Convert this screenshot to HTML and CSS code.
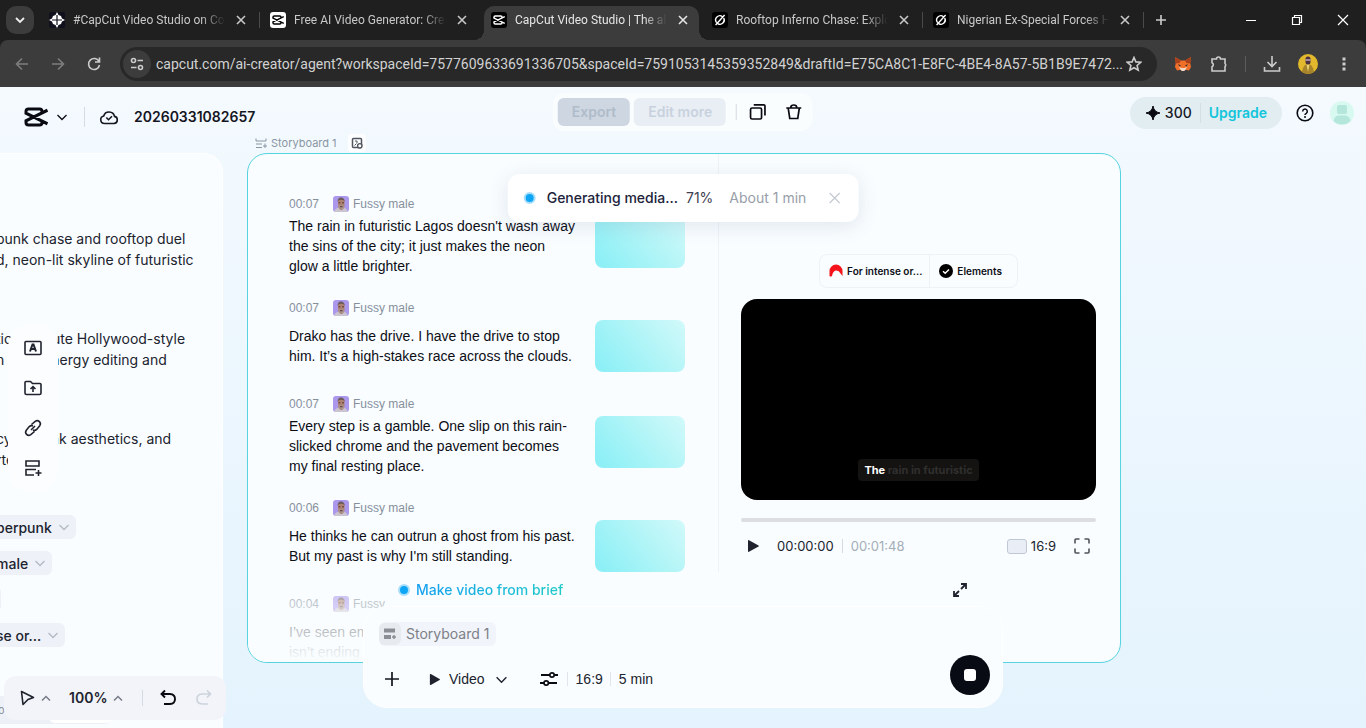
FILE: index.html
```
<!DOCTYPE html>
<html lang="en">
<head>
	<meta charset="UTF-8">
	<title>CapCut Video Studio</title>
	<link rel="stylesheet" href="styles.css">
</head>
<body>
	<!-- shared icons -->
	<svg class="sprite" aria-hidden="true">
		<symbol id="capcut" viewBox="0 0 24 20">
			<path d="M23.500 3.200 2 13.800V15.500Q2 18 4.500 18H15.500Q18 18 18 15.500V14.500M23.500 16.800 2 6.200V4.500Q2 2 4.500 2H15.500Q18 2 18 4.500V5.500" fill="none" stroke="currentColor" stroke-width="3"/>
		</symbol>
		<symbol id="grok" viewBox="0 0 16 16">
			<rect width="16" height="16" rx="3" fill="#000"/>
			<path d="M10.500 4.700A4.200 4.200 0 0 0 4.600 10.600M5.800 11.600A4.200 4.200 0 0 0 11.700 6M3.600 13 12.600 3" fill="none" stroke="#fff" stroke-width="1.400"/>
		</symbol>
		<symbol id="x" viewBox="0 0 16 16">
			<path d="m4 4 8 8M12 4l-8 8" fill="none" stroke="currentColor" stroke-width="1.600"/>
		</symbol>
		<symbol id="down" viewBox="0 0 12 12">
			<path d="m1.500 4 4.500 4.500L10.500 4" fill="none" stroke="currentColor" stroke-width="1.300"/>
		</symbol>
		<symbol id="up" viewBox="0 0 12 12">
			<path d="M2 8.500 6 4.500l4 4" fill="none" stroke="currentColor" stroke-width="1.400"/>
		</symbol>
		<symbol id="face" viewBox="0 0 16 16">
			<rect width="16" height="16" rx="3" fill="#ab98ec"/>
			<path d="M1 16q1-4 5-4.500h4q4 .5 5 4.500z" fill="#c9c4cf"/>
			<path d="M5 4q3-4 6.500 0v6q-1 4-3.200 4T5 10z" fill="#b08270"/>
			<path d="M4.600 6Q4.500 1.500 8 1.500T11.800 6L11 4.500Q8 3 5.500 4.500z" fill="#6b5a5c"/>
			<path d="M5 9.500q3-1 6.400 0-.4 3.500-3 3.700Q5.400 13 5 9.500" fill="#a99089"/>
			<path d="M5.500 6.800h2M9 6.800h2M7 10.700h2.500" stroke="#4a3034" stroke-width=".9"/>
		</symbol>
		<symbol id="play" viewBox="0 0 14 14">
			<path d="M2 1.800q0-1 1-.6L12.500 6.400q.8.600 0 1.200L3 12.800q-1 .4-1-.6z" fill="currentColor"/>
		</symbol>
	</svg>

	<header class="browser">
		<div class="tabstrip">
			<button class="tab-search" aria-label="Search tabs"><svg width="12" height="12"><path d="m2 4 4 4 4-4" fill="none" stroke="#eee" stroke-width="1.800"/></svg></button>
			<div class="tabs">
				<div class="tab">
					<svg width="16" height="16"><rect width="16" height="16" rx="2" fill="#10101c"/><path d="M8 0 9.500 3 12 4l1 2.500L16 8l-3 1.500L12 12l-2.500 1L8 16l-1.500-3L4 12 3 9.500 0 8l3-1.500L4 4l2.500-1z" fill="#fff"/><path d="M8 3v10M3 8h10" stroke="#10101c" stroke-width="1.200"/></svg>
					<span class="tab-title">#CapCut Video Studio on Community</span>
					<button class="tab-close" aria-label="Close tab"><svg><use href="#x"/></svg></button>
				</div>
				<div class="tab sep">
					<span class="fav fav-light"><svg width="12" height="10"><use href="#capcut"/></svg></span>
					<span class="tab-title">Free AI Video Generator: Create videos</span>
					<button class="tab-close" aria-label="Close tab"><svg><use href="#x"/></svg></button>
				</div>
				<div class="tab active">
					<span class="fav fav-dark"><svg width="12" height="10"><use href="#capcut"/></svg></span>
					<span class="tab-title">CapCut Video Studio | The all-in-one</span>
					<button class="tab-close" aria-label="Close tab"><svg><use href="#x"/></svg></button>
				</div>
				<div class="tab">
					<svg width="16" height="16"><use href="#grok"/></svg>
					<span class="tab-title">Rooftop Inferno Chase: Explosive</span>
					<button class="tab-close" aria-label="Close tab"><svg><use href="#x"/></svg></button>
				</div>
				<div class="tab sep">
					<svg width="16" height="16"><use href="#grok"/></svg>
					<span class="tab-title">Nigerian Ex-Special Forces Hero</span>
					<button class="tab-close" aria-label="Close tab"><svg><use href="#x"/></svg></button>
				</div>
				<button class="new-tab sep" aria-label="New tab"><svg width="12" height="12"><path d="M6 1v10M1 6h10" stroke="#ccc" stroke-width="1.600"/></svg></button>
			</div>
			<div class="window-buttons">
				<button aria-label="Minimize"><svg width="12" height="12"><path d="M1 6.500h10" stroke="#fff"/></svg></button>
				<button aria-label="Restore"><svg width="12" height="12"><path d="M1.500 3.500h7v7h-7zM3.500 3V1.500h7v7H9" fill="none" stroke="#fff" stroke-width="1.200"/></svg></button>
				<button aria-label="Close"><svg width="12" height="12"><path d="m1 1 10 10M11 1 1 11" stroke="#fff" stroke-width="1.200"/></svg></button>
			</div>
		</div>
		<div class="toolbar">
			<button class="dim" aria-label="Back"><svg width="16" height="16"><path d="M14 8H3M8 2.500 2.500 8 8 13.500" /></svg></button>
			<button class="dim" aria-label="Forward"><svg width="16" height="16"><path d="M2 8h11M8 2.500 13.500 8 8 13.500"/></svg></button>
			<button aria-label="Reload"><svg width="16" height="16"><path d="M13 5.500A5.500 5.500 0 1 0 13.500 9M13.500 1.500V6H9"/></svg></button>
			<div class="omnibox">
				<button class="site-info" aria-label="Site information"><svg width="14" height="14"><circle cx="3.500" cy="3.500" r="2"/><path d="M7.500 3.500H13M1 10.500h5.500"/><circle cx="10.500" cy="10.500" r="2"/></svg></button>
				<input class="url" type="text" aria-label="Address" value="capcut.com/ai-creator/agent?workspaceId=7577609633691336705&amp;spaceId=7591053145359352849&amp;draftId=E75CA8C1-E8FC-4BE4-8A57-5B1B9E7472...">
				<button class="bookmark" aria-label="Bookmark"><svg width="16" height="16"><path d="m8 1.500 1.900 4.400 4.800.4-3.600 3.200 1.100 4.700L8 11.700l-4.200 2.500 1.100-4.700L1.300 6.300l4.800-.4z"/></svg></button>
			</div>
			<div class="extensions">
				<button aria-label="Wallet"><svg class="plain" width="18" height="16"><path d="m1 1 6 3.500h4L17 1l-.8 6 .8 4-2 3.500-3.500-.8L10 15H8l-1.500-1.300-3.500.8L1 11l.8-4z" fill="#f0702a"/><path d="m1 1 6 3.500L5.500 7l-4 .5zM17 1l-6 3.500L12.500 7l4 .5z" fill="#a8411c"/><path d="m4 8 3 1.500-1.500 1zM14 8l-3 1.500 1.500 1z" fill="#33312f"/><path d="m5 11 2.500 1h3l2.500-1-1.500 2.700L10 15H8l-1.500-1.300z" fill="#f0d8c8"/></svg></button>
				<button aria-label="Extensions"><svg width="18" height="18"><path d="M2 4h4.500a2 2 0 0 1 4 0H15v4.500a2 2 0 0 1 0 3V16H2v-4.200a2.200 2.200 0 0 0 0-4z"/></svg></button>
				<span class="line"></span>
				<button aria-label="Downloads"><svg width="18" height="18"><path d="M9 1v10M4.500 7 9 11.500 13.500 7M1.500 12v4h15v-4"/></svg></button>
				<button aria-label="Profile"><svg class="plain" width="20" height="20"><circle cx="10" cy="10" r="10" fill="#e2b92c"/><path d="M4 18q1-6 4-7.500h4q3 1.500 4 7.500-6 4-12 0" fill="#a78329"/><path d="M8.500 10.500h3L10 18z" fill="#e9d27a"/><rect x="7.500" y="2.500" width="5" height="8" rx="2.500" fill="#4a3040"/><path d="M7.500 6h5" stroke="#b9a4b4"/></svg></button>
				<button aria-label="Menu"><svg class="plain" width="16" height="16"><path d="M6.500 1.500h3v3h-3zM6.500 6.500h3v3h-3zM6.500 11.500h3v3h-3z" fill="#ccc"/></svg></button>
			</div>
		</div>
	</header>

	<main class="app">
		<div class="topbar">
			<button class="logo" aria-label="CapCut menu"><svg width="24" height="20"><use href="#capcut"/></svg><svg width="12" height="12"><use href="#down"/></svg></button>
			<span class="line tall"></span>
			<svg width="20" height="20"><path d="M5.500 16.500H15a3.600 3.600 0 0 0 .5-7.100A5.600 5.600 0 0 0 4.700 9 3.800 3.800 0 0 0 5.500 16.500M7.300 10.500l2.200 2.200 3.500-3.500" fill="none" stroke="#15161f" stroke-width="1.600"/></svg>
			<h1>20260331082657</h1>
			<div class="account">
				<div class="credits">
					<svg width="16" height="16"><path d="M8 1q1 6 7 7-6 1-7 7-1-6-7-7 6-1 7-7" fill="#0a0b12" stroke="#0a0b12"/></svg>
					<span>300</span>
					<a href="#">Upgrade</a>
				</div>
				<button aria-label="Help"><svg width="18" height="18"><circle cx="9" cy="9" r="7.800" fill="none" stroke="#0a0b12" stroke-width="1.600"/><path d="M6.700 7.400a2.300 2.300 0 1 1 3.600 1.900Q9 10 9 11" fill="none" stroke="#0a0b12" stroke-width="1.500"/><circle cx="9" cy="13" r="1" fill="#0a0b12"/></svg></button>
				<button aria-label="Account"><svg width="24" height="24"><circle cx="12" cy="12" r="12" fill="#d8f9f0"/><rect x="7" y="4" width="10" height="9" rx="2" fill="#b5e6db"/><path d="M3.500 20q1-5 5-5.500h7q4 .5 5 5.500a12 12 0 0 1-17 0" fill="#b5e6db"/></svg></button>
			</div>
		</div>

		<section class="brief">
			<div class="brief-text">
				<p>punk chase and rooftop duel<br>d, neon-lit skyline of futuristic</p>
				<p>tic 1-minute Hollywood-style<br>n high-energy editing and</p>
				<p>cyberpunk aesthetics, and<br>rte</p>
				<div class="options">
					<button>berpunk <svg><use href="#down"/></svg></button>
					<button>male <svg><use href="#down"/></svg></button>
					<button class="cut" aria-label="Option"></button>
					<button>se or... <svg><use href="#down"/></svg></button>
				</div>
			</div>
			<div class="brief-foot"><span>o</span><i></i></div>
		</section>

		<section class="storyboard">
			<div class="board-label">
				<svg width="12" height="12"><path d="M1 1.500v2.500h10V1.500M1 7h6M1 10.500h6M10 6.500v4.500M8 9h4" fill="none" stroke="#8a95a3"/></svg>
				<span>Storyboard 1</span>
				<button aria-label="Add to board"><svg width="12" height="12"><rect x="1.500" y="1.500" width="9" height="9" rx="1" fill="none" stroke="#50565e" stroke-width="1.500"/><circle cx="8.800" cy="8.800" r="2.200" fill="#fff" stroke="#50565e" stroke-width="1.300"/><path d="M4 4h2v2M3.500 8.500l2-2" fill="none" stroke="#50565e"/></svg></button>
			</div>
			<div class="board">
				<div class="script">
					<article class="scene">
						<div class="meta"><time>00:07</time><svg><use href="#face"/></svg><span>Fussy male</span></div>
						<p>The rain in futuristic Lagos doesn't wash away<br>the sins of the city; it just makes the neon<br>glow a little brighter.</p>
						<div class="thumb"></div>
					</article>
					<article class="scene">
						<div class="meta"><time>00:07</time><svg><use href="#face"/></svg><span>Fussy male</span></div>
						<p>Drako has the drive. I have the drive to stop<br>him. It’s a high-stakes race across the clouds.</p>
						<div class="thumb"></div>
					</article>
					<article class="scene">
						<div class="meta"><time>00:07</time><svg><use href="#face"/></svg><span>Fussy male</span></div>
						<p>Every step is a gamble. One slip on this rain-<br>slicked chrome and the pavement becomes<br>my final resting place.</p>
						<div class="thumb"></div>
					</article>
					<article class="scene">
						<div class="meta"><time>00:06</time><svg><use href="#face"/></svg><span>Fussy male</span></div>
						<p>He thinks he can outrun a ghost from his past.<br>But my past is why I'm still standing.</p>
						<div class="thumb"></div>
					</article>
					<article class="scene">
						<div class="meta"><time>00:04</time><svg><use href="#face"/></svg><span>Fussy male</span></div>
						<p>I’ve seen em<br>isn’t ending</p>
						<div class="thumb"></div>
					</article>
				</div>
				<div class="preview">
					<div class="chips">
						<button><svg width="14" height="14"><path d="M.5 12V7a6.500 6.500 0 0 1 13 0v5l-2-2.500Q10 6.500 7.500 6.500 4 6.500 3 12q-1.500 1-2.500 0" fill="#f5141b"/></svg>For intense or...</button>
						<button><svg width="14" height="14"><circle cx="7" cy="7" r="7" fill="#000"/><path d="m4 7.200 2.200 2.100L10 5.500" fill="none" stroke="#fff" stroke-width="1.500"/></svg>Elements</button>
					</div>
					<div class="video"><p class="caption">The <span>rain in futuristic</span></p></div>
					<input class="seek" type="range" min="0" max="108" value="0" aria-label="Seek">
					<div class="controls">
						<button aria-label="Play"><svg width="14" height="14"><use href="#play"/></svg></button>
						<time>00:00:00</time>
						<time class="total">00:01:48</time>
						<button class="ratio"><i></i>16:9</button>
						<button aria-label="Full screen"><svg width="16" height="16"><path d="M1 5.500V2q0-1 1-1h3.500M10.500 1H14q1 0 1 1v3.500M15 10.500V14q0 1-1 1h-3.500M5.500 15H2q-1 0-1-1v-3.500" fill="none" stroke="#50535b" stroke-width="1.600"/></svg></button>
					</div>
				</div>
			</div>
		</section>

		<div class="actions">
			<button class="export" disabled>Export</button>
			<button class="edit" disabled>Edit more</button>
			<span class="line"></span>
			<button aria-label="Duplicate"><svg width="18" height="18"><rect x="1.800" y="5" width="11" height="11" rx="1.500"/><path d="M5 1.800h10q1.200 0 1.200 1.200v9.500"/></svg></button>
			<button aria-label="Delete"><svg width="18" height="18"><path d="M1.500 5h15M3.500 5.500 5 15.500h8l1.500-10M6 4.500Q6 2 9 2t3 2.500"/></svg></button>
		</div>

		<div class="toast" role="status">
			<i class="dot"></i>
			<strong>Generating media...</strong>
			<span>71%</span>
			<span class="eta">About 1 min</span>
			<button aria-label="Dismiss"><svg width="16" height="16"><path d="m3 3 10 10M13 3 3 13" stroke="#c4cad2" stroke-width="1.200"/></svg></button>
		</div>

		<nav class="side-tools">
			<button aria-label="Text"><svg width="20" height="20"><rect x="2" y="3.500" width="16" height="13" rx="1"/><path d="m7 13.500 2.500-7h1l2.500 7M8 11h4" stroke-width="2"/></svg></button>
			<button aria-label="Upload"><svg width="20" height="20"><path d="M2 15V4.500q0-1 1-1h4.500l2 2H17q1 0 1 1V15q0 1.500-1.500 1.500h-13Q2 16.500 2 15M10 14V9M7.500 11 10 8.700l2.500 2.300"/></svg></button>
			<button aria-label="Link"><svg width="20" height="20"><path d="m8.500 6.500 3.700-3.200q2.300-1.600 4.200.3t.3 4.200l-3 3.600q-1.700 1.700-3.700.6M11.500 13.500l-3.700 3.200q-2.300 1.600-4.200-.3t-.3-4.200l3-3.600Q8 6.900 10 8M8 12l4-4"/></svg></button>
			<button aria-label="Storyboard"><svg width="20" height="20"><path d="M3 3h13v5H3zM13 11.500H3v5.500h8M15.500 12v6M12.500 15h6"/></svg></button>
		</nav>

		<div class="zoombar">
			<button aria-label="Select tool"><svg width="16" height="16"><path d="m2.500 1.500 12 6-5.500 2-5 5z" fill="none" stroke="#20232e" stroke-width="1.600" stroke-linejoin="round"/></svg><svg class="small" width="12" height="12"><use href="#up"/></svg></button>
			<button class="zoom">100% <svg class="small" width="12" height="12"><use href="#up"/></svg></button>
			<span class="line"></span>
			<button aria-label="Undo"><svg width="18" height="18"><path d="M6 1.500 2.500 5 6 8.500M3 5h8q5 .3 5 5t-5 5H5" fill="none" stroke="#0a0b12" stroke-width="1.900"/></svg></button>
			<button aria-label="Redo" disabled><svg width="18" height="18"><path d="M12 1.500 15.500 5 12 8.500M15 5H7q-5 .3-5 5t5 5h6" fill="none" stroke="#ccd3dd" stroke-width="1.700"/></svg></button>
		</div>

		<div class="composer">
			<div class="composer-head">
				<i class="dot"></i>
				<span>Make video from brief</span>
				<button aria-label="Expand"><svg width="16" height="16"><path d="M9 2h5v5M14 2 9 7M7 14H2V9M2 14l5-5" fill="none" stroke="#20232e" stroke-width="1.800"/></svg></button>
			</div>
			<div class="composer-body">
				<button class="context"><span><svg width="14" height="14"><path d="M1 1.500h11v4H1zM1 8h7v4H1z" fill="#8b8e94"/><path d="M11 8v4M9 10h4" stroke="#8b8e94" stroke-width="1.500"/></svg></span>Storyboard 1</button>
				<div class="composer-row">
					<button aria-label="Add"><svg width="16" height="16"><path d="M8 1v14M1 8h14" stroke="#15161f" stroke-width="1.700"/></svg></button>
					<button class="mode"><svg width="13" height="13"><use href="#play"/></svg>Video<svg width="13" height="13"><use href="#down"/></svg></button>
					<button class="settings"><svg width="18" height="18"><path d="M1 5h9M14.500 5H18M0 13h4M8.500 13H17" stroke="#0a0b12" stroke-width="1.800"/><circle cx="12" cy="5" r="2.200" fill="none" stroke="#0a0b12" stroke-width="1.700"/><circle cx="6.200" cy="13" r="2.200" fill="none" stroke="#0a0b12" stroke-width="1.700"/></svg><span>16:9</span><span>5 min</span></button>
					<button class="stop" aria-label="Stop"><i></i></button>
				</div>
			</div>
		</div>
	</main>
</body>
</html>
```
FILE: styles.css
```
* {
	box-sizing: border-box;
}
body {
	margin: 0;
	height: 100vh;
	display: flex;
	flex-direction: column;
	overflow: hidden;
	font: 14px/20px Inter, "Liberation Sans", sans-serif;
	color: #20232e;
}
button {
	display: flex;
	align-items: center;
	justify-content: center;
	padding: 0;
	border: 0;
	background: none;
	color: inherit;
	font: inherit;
	white-space: nowrap;
}
svg {
	flex: none;
}
p {
	margin: 0;
}
.sprite {
	display: none;
}
.line {
	width: 1px;
	height: 16px;
	background: #d5dbe2;
}

/* browser */
.browser {
	flex: none;
	background: #1f1f1f;
	color: #c8c8c8;
	font-family: Roboto, "Noto Sans", sans-serif;
}
.tabstrip {
	display: flex;
	height: 40px;
}
.tab-search {
	width: 28px;
	height: 28px;
	margin: 6px 4px 6px 6px;
	border-radius: 10px;
	background: #3c3c3c;
}
.tabs {
	display: flex;
	flex: 1;
	min-width: 0;
}
.tab {
	position: relative;
	display: flex;
	align-items: center;
	flex: 0 1 221px;
	min-width: 0;
	padding: 0 10px 0 11px;
	font-size: 12px;
}
.sep::before {
	content: "";
	position: absolute;
	left: 0;
	top: 12px;
	width: 1px;
	height: 16px;
	background: #4a4a4a;
}
.tab-title {
	flex: 1;
	min-width: 0;
	margin: 0 8px 0 8px;
	overflow: hidden;
	white-space: nowrap;
	-webkit-mask-image: linear-gradient(90deg, #000 calc(100% - 24px), transparent);
	mask-image: linear-gradient(90deg, #000 calc(100% - 24px), transparent);
}
.tab-close svg {
	width: 16px;
	height: 16px;
}
.fav {
	display: flex;
	flex: none;
	align-items: center;
	justify-content: center;
	width: 16px;
	height: 16px;
	border-radius: 3px;
}
.fav-light {
	background: #fff;
	color: #000;
}
.fav-dark {
	background: #000;
	color: #fff;
}
.active {
	z-index: 0;
	color: #e6e6e6;
}
.active::before {
	content: "";
	position: absolute;
	z-index: -1;
	inset: 6px 2px 0 4px;
	border-radius: 10px 10px 0 0;
	background: #3c3c3c;
}
.active::after {
	content: "";
	position: absolute;
	z-index: -1;
	left: -6px;
	right: -8px;
	bottom: 0;
	height: 10px;
	background:
		radial-gradient(circle at 0 0, transparent 10px, #3c3c3c 10px) 0 0 / 10px 10px no-repeat,
		radial-gradient(circle at 100% 0, transparent 10px, #3c3c3c 10px) 100% 0 / 10px 10px no-repeat;
}
.new-tab {
	position: relative;
	width: 36px;
}
.window-buttons {
	display: flex;
}
.window-buttons button {
	width: 46px;
}
.toolbar {
	display: flex;
	align-items: center;
	gap: 8px;
	height: 47px;
	padding: 0 8px;
	background: #3c3c3c;
	border-radius: 8px 8px 0 0;
}
.toolbar button {
	flex: none;
	width: 28px;
	height: 28px;
}
.toolbar svg {
	fill: none;
	stroke: #ccc;
	stroke-width: 1.6;
}
.toolbar .plain {
	stroke: none;
}
.toolbar .dim svg {
	stroke: #7d7d7d;
}
.omnibox {
	display: flex;
	flex: 1;
	align-items: center;
	height: 34px;
	margin: 0 4px;
	padding: 0 14px 0 3px;
	border-radius: 17px;
	background: #282828;
}
.omnibox .site-info {
	border-radius: 14px;
	background: #3c3c3c;
}
.omnibox .bookmark {
	width: 18px;
}
.url {
	flex: 1;
	min-width: 0;
	padding: 0 0 0 5px;
	border: 0;
	outline: 0;
	background: none;
	color: #d2d2d2;
	font: 14px Roboto, "Noto Sans", sans-serif;
}
.extensions {
	display: flex;
	align-items: center;
	gap: 8px;
}
.extensions .line {
	margin: 0 4px;
	background: #5c5c5c;
}

/* canvas */
.app {
	position: relative;
	flex: 1;
	overflow: hidden;
	background: linear-gradient(#f4fafe, #edf7fe 40%, #e4f3fd);
}
.topbar {
	display: flex;
	align-items: center;
	height: 60px;
	padding: 0 12px 0 24px;
	color: #15161f;
}
.logo {
	gap: 8px;
	color: #0a0b12;
}
.tall {
	height: 20px;
	margin: 0 14px 0 16px;
}
h1 {
	margin: 0 0 0 15px;
	font-size: 14px;
	font-weight: 600;
}
.account {
	display: flex;
	align-items: center;
	gap: 16px;
	height: 32px;
	margin: 0 0 8px auto;
}
.credits {
	display: flex;
	align-items: center;
	height: 32px;
	margin-right: -2px;
	padding: 0 15px;
	border-radius: 16px;
	background: #e2edf2;
	font-weight: 500;
}
.credits span {
	margin-left: 4px;
	padding-right: 8px;
	border-right: 1px solid #d3dfe5;
}
.credits a {
	margin-left: 8px;
	color: #12c5da;
	font-weight: 600;
	text-decoration: none;
}

.brief {
	position: absolute;
	left: 0;
	top: 66px;
	bottom: 0;
	width: 223px;
	border: 1px solid #fff;
	border-width: 1px 1px 0 0;
	border-radius: 0 20px 0 0;
	overflow: hidden;
	background: #f9fdff;
}
.brief-text {
	margin: 74px 0 0 -4px;
	line-height: 21px;
	white-space: nowrap;
}
.brief-text p {
	height: 42px;
	margin-bottom: 58px;
}
.options {
	display: flex;
	flex-direction: column;
	align-items: flex-start;
	gap: 12px;
	margin-top: -13px;
}
.options button {
	height: 24px;
	gap: 6px;
	padding-right: 6px;
	border-radius: 0 6px 6px 0;
	background: #eef1f8;
	font-weight: 500;
}
.options svg {
	width: 12px;
	height: 12px;
	color: #b3bac4;
}
.options .cut {
	width: 5px;
	padding: 0;
}
.brief-foot {
	position: absolute;
	left: 0;
	bottom: 4px;
	display: flex;
	align-items: center;
	width: 113px;
	height: 28px;
	border-radius: 0 0 8px 0;
	background: #edf0f7;
	color: #8a95a3;
	font-size: 11px;
}
.brief-foot span {
	margin-left: -2px;
}
.brief-foot i {
	width: 64px;
	height: 26px;
	margin-left: auto;
	border-radius: 6px;
	background: #fff;
}

.storyboard {
	position: absolute;
	left: 247px;
	top: 46px;
	width: 874px;
}
.board-label {
	display: flex;
	align-items: center;
	gap: 4px;
	height: 20px;
	padding-left: 8px;
	color: #8a95a3;
	font-size: 11px;
}
.board-label button {
	width: 18px;
	height: 18px;
	margin-left: 7px;
	border-radius: 4px;
	background: #fdfeff;
}
.board {
	display: grid;
	grid-template-columns: 471px 1fr;
	height: 510px;
	border: 1px solid #55d3de;
	border-radius: 20px;
	overflow: hidden;
	background: #f9fdff;
}
.script {
	position: relative;
	display: flex;
	flex-direction: column;
	gap: 20px;
	padding: 38px 33px 0 41px;
	overflow: hidden;
	border-right: 1px solid #eef3f7;
}
.script::after {
	content: "";
	position: absolute;
	inset: auto 0 0 0;
	height: 82px;
	background: linear-gradient(rgba(249, 253, 255, .3), #f9fdff);
}
.scene {
	display: grid;
	grid-template-columns: 1fr 90px;
	flex: none;
	color: #0d0e16;
	font-family: "Liberation Sans", Arial, sans-serif;
	white-space: nowrap;
}
.scene p {
	align-self: center;
}
.meta {
	display: flex;
	align-items: center;
	grid-column: 1 / 3;
	height: 24px;
	color: #86909c;
	font-size: 12px;
}
.meta svg {
	width: 16px;
	height: 16px;
	margin: 0 4px 0 14px;
}
.thumb {
	height: 52px;
	border-radius: 8px;
	background: linear-gradient(50deg, #8ef0f6 10%, #b4f5f7 60%, #d2f9fa);
}
.preview {
	display: flex;
	flex-direction: column;
	align-items: center;
	padding: 100px 24px 0 22px;
}
.chips {
	display: flex;
	height: 34px;
	margin-bottom: 11px;
	border: 1px solid #eef2f6;
	border-radius: 8px;
	color: #0d0e16;
	font-size: 10px;
	font-weight: 600;
}
.chips button {
	gap: 4px;
	padding: 0 7px 0 9px;
}
.chips button + button {
	padding-right: 15px;
	border-left: 1px solid #eef2f6;
}
.video {
	display: flex;
	align-items: flex-end;
	justify-content: center;
	align-self: stretch;
	aspect-ratio: 355 / 201;
	padding-bottom: 19px;
	border-radius: 16px;
	background: #000;
}
.caption {
	padding: 1px 6px;
	border-radius: 4px;
	background: #141312;
	color: #fff;
	font-size: 11px;
	font-weight: 700;
}
.caption span {
	color: #302f2e;
}
.seek {
	appearance: none;
	align-self: stretch;
	height: 4px;
	margin: 18px 0 0;
	border-radius: 2px;
	background: #dcdee2;
}
.seek::-webkit-slider-thumb {
	appearance: none;
	width: 0;
	height: 0;
}
.controls {
	display: flex;
	align-items: center;
	align-self: stretch;
	margin-top: 14px;
	padding: 0 6px 0 5px;
	font-size: 13px;
}
.controls time {
	margin-left: 17px;
}
.controls .total {
	margin-left: 8px;
	padding-left: 8px;
	border-left: 1px solid #d5dbe2;
	line-height: 14px;
	color: #a4adb9;
}
.ratio {
	gap: 4px;
	margin: 0 18px 0 auto;
}
.ratio i {
	width: 20px;
	height: 15px;
	border: 1px solid #c0c8d4;
	border-radius: 3px;
	background: #e9edf5;
}

/* floating panels */
.actions {
	position: absolute;
	left: 50%;
	top: 6px;
	display: flex;
	align-items: center;
	height: 38px;
	padding: 0 10px 0 5px;
	border-radius: 12px;
	background: #fafdfe;
	transform: translateX(-50%);
}
.actions .export,
.actions .edit {
	height: 28px;
	padding: 0 14px;
	border-radius: 6px;
	background: #cdd6e1;
	color: #b0bcca;
	font-weight: 600;
}
.actions .edit {
	margin: 0 10px 0 4px;
	background: #e9eef5;
	color: #c8d2de;
}
.actions .line + button {
	margin: 0 18px 0 12px;
}
.actions svg {
	fill: none;
	stroke: #0a0b12;
	stroke-width: 1.7;
}
.toast {
	position: absolute;
	left: 50%;
	top: 87px;
	display: flex;
	align-items: center;
	height: 48px;
	padding: 0 16px;
	border-radius: 12px;
	background: #fff;
	box-shadow: 0 4px 20px rgba(60, 80, 120, .13);
	color: #3c4050;
	white-space: nowrap;
	transform: translateX(-50%);
}
.toast strong {
	margin: 0 8px 0 11px;
	color: #20233a;
	font-weight: 500;
}
.toast .eta {
	margin: 0 20px 0 16px;
	color: #989ea8;
}
.dot {
	flex: none;
	width: 12px;
	height: 12px;
	border: 2px solid #a9defb;
	border-radius: 6px;
	background: #0ea5f5;
}
.side-tools {
	position: absolute;
	left: 8px;
	top: 236px;
	display: flex;
	flex-direction: column;
	gap: 20px;
	padding: 15px;
	border-radius: 25px;
	background: #fcfdff;
}
.side-tools svg {
	fill: none;
	stroke: #20232e;
	stroke-width: 1.6;
}
.zoombar {
	position: absolute;
	left: 4px;
	bottom: 8px;
	display: flex;
	align-items: center;
	height: 44px;
	padding: 0 13px 0 15px;
	border-radius: 12px;
	background: #f2f4f9;
}
.zoombar button {
	gap: 5px;
}
.zoombar .zoom {
	margin: 0 18px 0 17px;
	font-weight: 600;
}
.zoombar .line {
	margin-right: 16px;
}
.zoombar .line + button {
	margin-right: 18px;
}
.small {
	color: #737985;
}
.composer {
	position: absolute;
	left: 50%;
	bottom: 20px;
	width: 640px;
	max-width: 100%;
	transform: translateX(-50%);
}
.composer-head {
	display: flex;
	align-items: center;
	height: 34px;
	margin: 0 22px;
	padding: 2px 13px 0;
	border-radius: 20px 20px 0 0;
	background: #f9fdff;
	font-weight: 500;
}
.composer-head span {
	margin-left: 6px;
	background: linear-gradient(90deg, #139fef, #20cbc8);
	-webkit-background-clip: text;
	background-clip: text;
	color: transparent;
}
.composer-head button {
	margin-left: auto;
}
.composer-body {
	padding: 15px 12px 12px 15px;
	height: 102px;
	border: 1px solid #fff;
	border-radius: 24px;
	background: #f9fdff;
}
.context {
	height: 24px;
	gap: 5px;
	padding-right: 7px;
	border-radius: 6px;
	background: #f1f4fa;
	color: #7d8087;
}
.context span {
	display: flex;
	align-items: center;
	justify-content: center;
	width: 22px;
	height: 22px;
	border-radius: 6px;
	background: #e7ebef;
}
.composer-row {
	display: flex;
	align-items: center;
	height: 40px;
	margin-top: 13px;
	padding-left: 5px;
	font-family: "Liberation Sans", Arial, sans-serif;
}
.mode {
	gap: 8px;
	margin: 0 32px 0 28px;
}
.mode svg:last-child {
	margin-left: 2px;
}
.settings span {
	margin-left: 9px;
	padding-left: 8px;
	border-left: 1px solid #e1e6ec;
	line-height: 14px;
}
.settings span + span {
	margin-left: 7px;
}
.stop {
	width: 40px;
	height: 40px;
	margin: -8px 0 0 auto;
	border-radius: 20px;
	background: #090b14;
}
.stop i {
	width: 12px;
	height: 12px;
	border-radius: 3px;
	background: #fff;
}
```
